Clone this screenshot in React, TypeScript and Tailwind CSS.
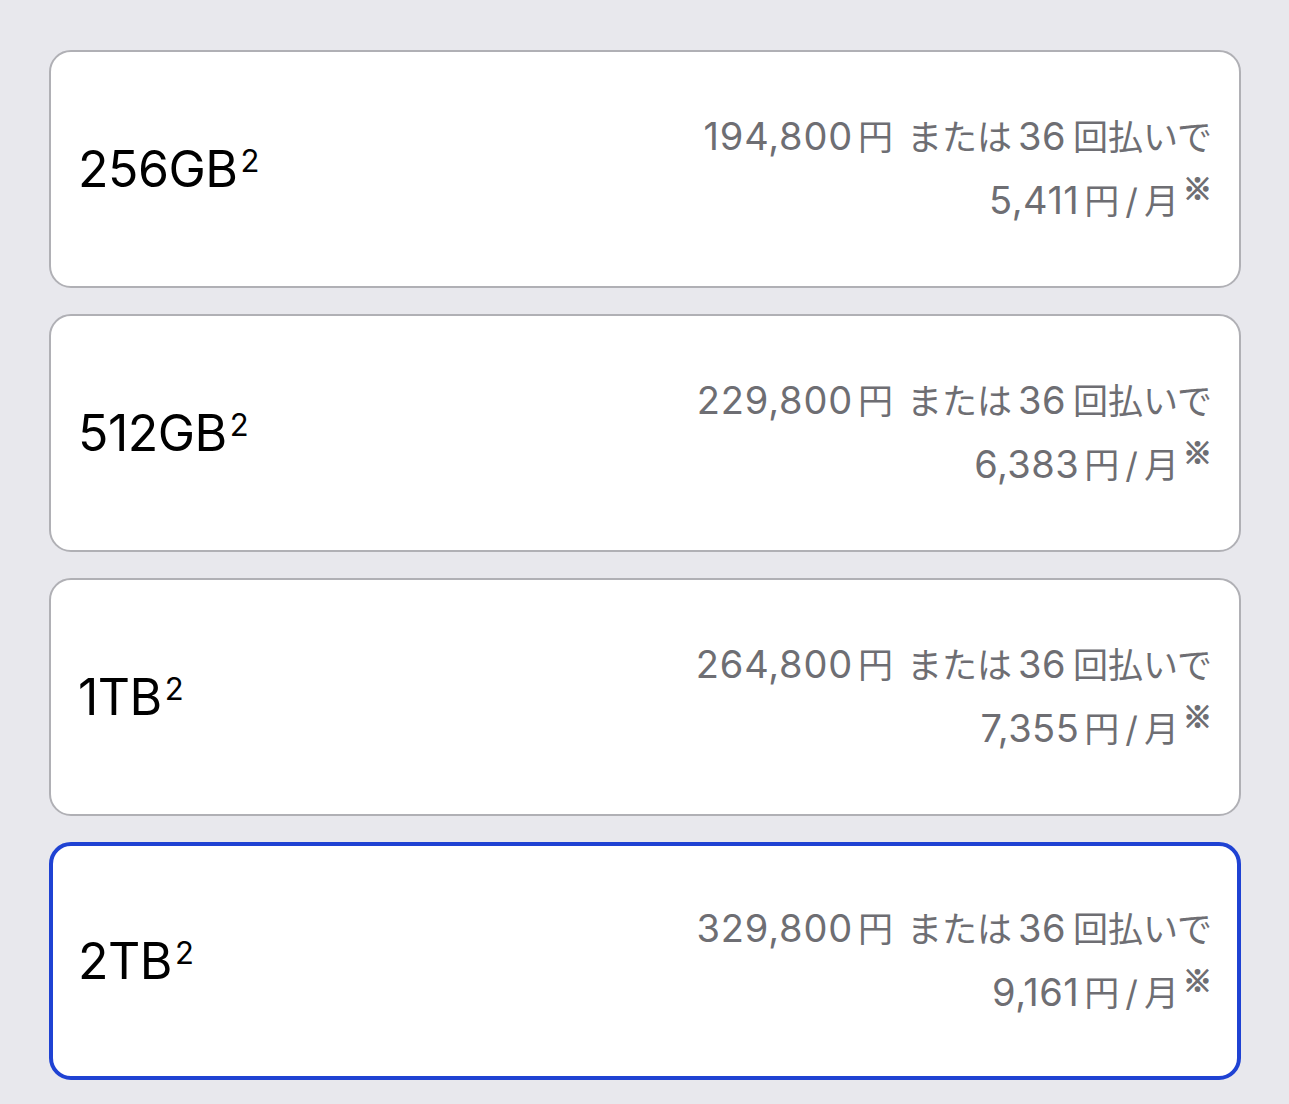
const options = [
  { size: "256GB", price: "194,800", monthly: "5,411" },
  { size: "512GB", price: "229,800", monthly: "6,383" },
  { size: "1TB", price: "264,800", monthly: "7,355" },
  { size: "2TB", price: "329,800", monthly: "9,161", selected: true },
];

const font = { fontFamily: 'Inter, "Noto Sans CJK JP", sans-serif' };

function StorageCard({ option }: { option: (typeof options)[number] }) {
  return (
    <div
      className={`h-[238px] bg-white rounded-[22px] flex items-center justify-between ${
        option.selected
          ? "border-4 border-[#1f42d3] pl-[25px] pr-[25px]"
          : "border-2 border-[#b0b0b5] pl-[27px] pr-[27px]"
      }`}
    >
      {/* Capacity */}
      <div className="text-[50px] leading-none text-black tracking-[-0.5px]">
        {option.size}
        <span className="relative top-[-15px] text-[31px] ml-[3px]">2</span>
      </div>

      {/* Price */}
      <div className="text-right text-[#6e6e73] leading-[63px]">
        <div className="flex items-baseline justify-end">
          <span className="text-[38px] tracking-[0.8px]">{option.price}</span>
          <span className="text-[35px] ml-[5px]">円</span>
          <span className="text-[35px] ml-[14px]">または</span>
          <span className="text-[38px] tracking-[0.5px] ml-[6px]">36</span>
          <span className="text-[35px] ml-[7px]">回払いで</span>
        </div>
        <div className="flex items-baseline justify-end">
          <span className="text-[38px] tracking-[0.5px]">{option.monthly}</span>
          <span className="text-[35px] ml-[5px]">円</span>
          <span className="text-[35px] ml-[6px]">/</span>
          <span className="text-[35px] ml-[6px]">月</span>
          <span className="relative top-[-14px] text-[29px] font-['Noto_Sans_CJK_JP',sans-serif] [-webkit-text-stroke:1.3px_#6e6e73] ml-[4px]">
            ※
          </span>
        </div>
      </div>
    </div>
  );
}

export default function App() {
  return (
    <div className="min-h-[1104px] bg-[#e8e8ed] pl-[49px] pr-[48px] pt-[50px] pb-[24px]" style={font}>
      <div className="flex flex-col gap-[26px]">
        {options.map((o) => (
          <StorageCard key={o.size} option={o} />
        ))}
      </div>
    </div>
  );
}
